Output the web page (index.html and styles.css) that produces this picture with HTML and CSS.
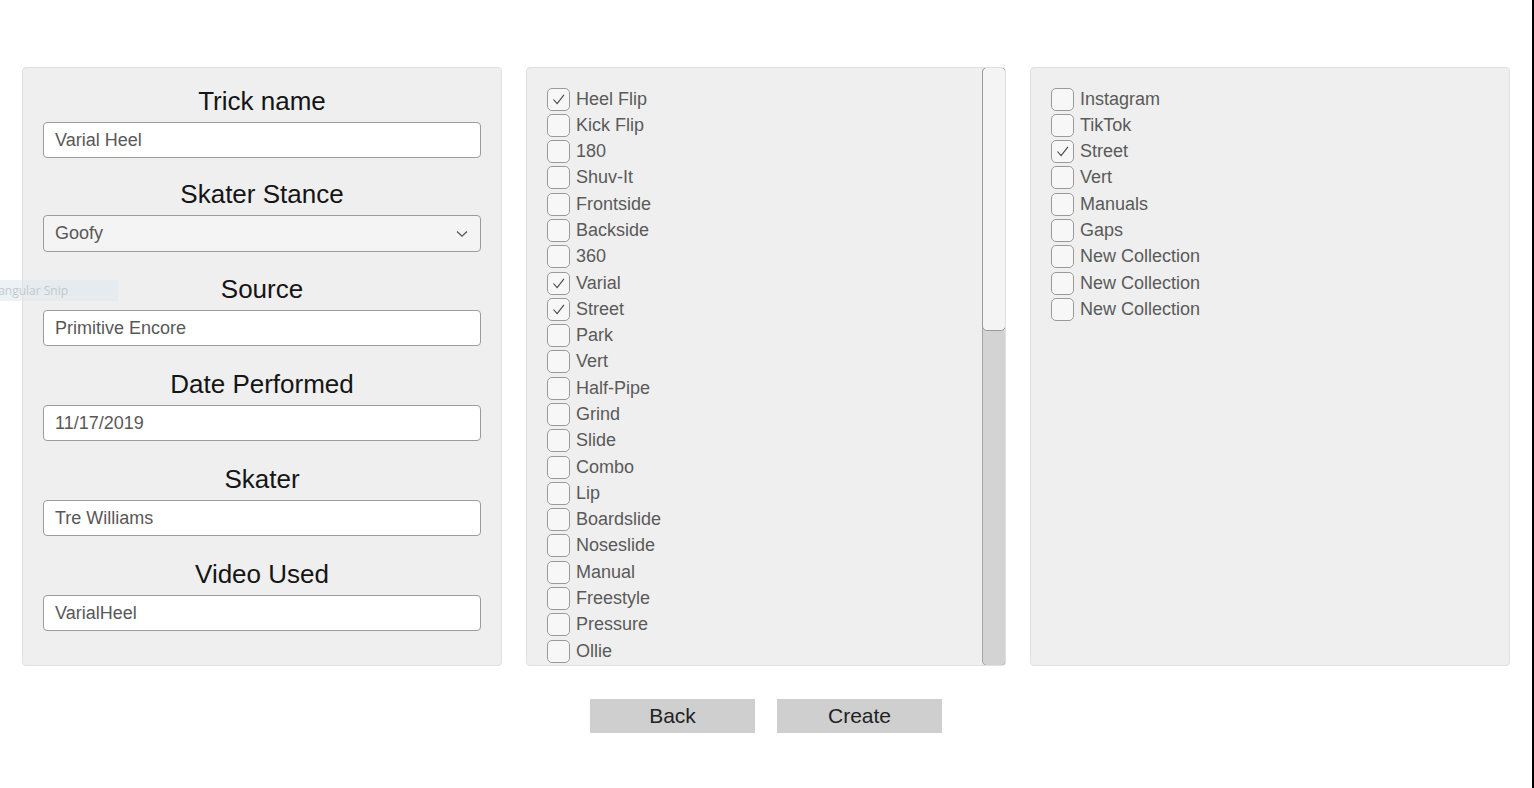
FILE: index.html
```html
<!DOCTYPE html>
<html lang="en">
<head>
<meta charset="utf-8">
<title>Create Trick</title>
<link rel="stylesheet" href="styles.css">
</head>
<body>
<div class="app">
  <div class="panels">
    <section class="panel form-panel">
      <div class="field">
        <label class="field-label">Trick name</label>
        <div class="input">Varial Heel</div>
      </div>
      <div class="field field-select">
        <label class="field-label">Skater Stance</label>
        <div class="input select">Goofy
          <svg class="chevron" width="12" height="8" viewBox="0 0 12 8"><path d="M1 1.5 L6 6.2 L11 1.5" fill="none" stroke="#555" stroke-width="1.3"/></svg>
        </div>
      </div>
      <div class="field">
        <label class="field-label">Source</label>
        <div class="input">Primitive Encore</div>
      </div>
      <div class="field">
        <label class="field-label">Date Performed</label>
        <div class="input">11/17/2019</div>
      </div>
      <div class="field">
        <label class="field-label">Skater</label>
        <div class="input">Tre Williams</div>
      </div>
      <div class="field">
        <label class="field-label">Video Used</label>
        <div class="input">VarialHeel</div>
      </div>
    </section>

    <section class="panel list-panel">
      <div class="list">
        <div class="item"><span class="box checked"><svg viewBox="0 0 23 23"><path d="M6 11.5 L10 16 L17.5 6.5" fill="none" stroke="#444" stroke-width="1.2"/></svg></span>Heel Flip</div>
        <div class="item"><span class="box"></span>Kick Flip</div>
        <div class="item"><span class="box"></span>180</div>
        <div class="item"><span class="box"></span>Shuv-It</div>
        <div class="item"><span class="box"></span>Frontside</div>
        <div class="item"><span class="box"></span>Backside</div>
        <div class="item"><span class="box"></span>360</div>
        <div class="item"><span class="box checked"><svg viewBox="0 0 23 23"><path d="M6 11.5 L10 16 L17.5 6.5" fill="none" stroke="#444" stroke-width="1.2"/></svg></span>Varial</div>
        <div class="item"><span class="box checked"><svg viewBox="0 0 23 23"><path d="M6 11.5 L10 16 L17.5 6.5" fill="none" stroke="#444" stroke-width="1.2"/></svg></span>Street</div>
        <div class="item"><span class="box"></span>Park</div>
        <div class="item"><span class="box"></span>Vert</div>
        <div class="item"><span class="box"></span>Half-Pipe</div>
        <div class="item"><span class="box"></span>Grind</div>
        <div class="item"><span class="box"></span>Slide</div>
        <div class="item"><span class="box"></span>Combo</div>
        <div class="item"><span class="box"></span>Lip</div>
        <div class="item"><span class="box"></span>Boardslide</div>
        <div class="item"><span class="box"></span>Noseslide</div>
        <div class="item"><span class="box"></span>Manual</div>
        <div class="item"><span class="box"></span>Freestyle</div>
        <div class="item"><span class="box"></span>Pressure</div>
        <div class="item"><span class="box"></span>Ollie</div>
        <div class="item"><span class="box"></span></div>
      </div>
      <div class="scrollbar">
        <div class="thumb"></div>
      </div>
    </section>

    <section class="panel list-panel plain">
      <div class="list">
        <div class="item"><span class="box"></span>Instagram</div>
        <div class="item"><span class="box"></span>TikTok</div>
        <div class="item"><span class="box checked"><svg viewBox="0 0 23 23"><path d="M6 11.5 L10 16 L17.5 6.5" fill="none" stroke="#444" stroke-width="1.2"/></svg></span>Street</div>
        <div class="item"><span class="box"></span>Vert</div>
        <div class="item"><span class="box"></span>Manuals</div>
        <div class="item"><span class="box"></span>Gaps</div>
        <div class="item"><span class="box"></span>New Collection</div>
        <div class="item"><span class="box"></span>New Collection</div>
        <div class="item"><span class="box"></span>New Collection</div>
      </div>
    </section>
  </div>

  <div class="actions">
    <button class="btn">Back</button>
    <button class="btn">Create</button>
  </div>

  <div class="snip-tip"><span>Rectangular Snip</span></div>
</div>
</body>
</html>
```

FILE: styles.css
```css
* {
  box-sizing: border-box;
}

html, body {
  margin: 0;
  padding: 0;
  background: #ffffff;
}

body {
  font-family: "Liberation Sans", Arial, sans-serif;
}

.app {
  position: relative;
  width: 1534px;
  height: 788px;
  border-right: 2px solid #000;
  padding-top: 67px;
  overflow: hidden;
}

.panels {
  display: flex;
  gap: 24px;
  padding-left: 22px;
}

.panel {
  width: 480px;
  height: 599px;
  background: #efefef;
  border: 1px solid #e0e0e0;
  border-radius: 4px;
}

/* Form panel */
.form-panel {
  padding: 18px 20px 0;
}

.field {
  margin-bottom: 23px;
}

.field:first-child {
  margin-bottom: 21px;
}

.field-select {
  margin-bottom: 22px;
}

.field-label {
  display: block;
  text-align: center;
  font-size: 26px;
  line-height: 30px;
  color: #151515;
  margin-bottom: 6px;
}

.input {
  height: 36px;
  background: #ffffff;
  border: 1px solid #9c9c9c;
  border-radius: 4px;
  padding: 0 11px;
  display: flex;
  align-items: center;
  font-size: 18px;
  color: #585858;
}

.select {
  height: 37px;
  background: #f4f4f4;
  justify-content: space-between;
}

.chevron {
  margin-right: 1px;
}

/* List panels */
.list-panel {
  display: flex;
  overflow: hidden;
}

.list {
  flex: 1;
  padding: 18px 20px 0;
  overflow: hidden;
}

.item {
  display: flex;
  align-items: center;
  height: 26.29px;
  font-size: 18px;
  color: #5a5a5a;
  white-space: nowrap;
}

.box {
  width: 23px;
  height: 23px;
  flex: none;
  border: 1px solid #9a9a9a;
  border-radius: 5px;
  background: #f7f7f7;
  margin-right: 6px;
  display: flex;
}

.box svg {
  width: 21px;
  height: 21px;
}

.scrollbar {
  width: 24px;
  flex: none;
  margin: -1px -1px -1px 0;
  background: #d3d3d3;
  border: 1px solid #a6a6a6;
  border-radius: 5px;
  position: relative;
}

.thumb {
  height: 264px;
  margin: -1px -1px 0;
  background: #f4f4f4;
  border: 1px solid #9a9a9a;
  border-radius: 5px;
}

/* Buttons */
.actions {
  display: flex;
  justify-content: center;
  gap: 22px;
  margin-top: 33px;
}

.btn {
  width: 165px;
  height: 34px;
  border: none;
  border-radius: 0;
  background: #cfcfcf;
  font-family: "Liberation Sans", Arial, sans-serif;
  font-size: 21px;
  color: #222;
  padding: 0;
}

/* Faint screen snip tooltip overlay */
.snip-tip {
  position: absolute;
  left: 0;
  top: 280px;
  width: 118px;
  height: 21px;
  background: rgba(222, 232, 238, 0.55);
  overflow: hidden;
  white-space: nowrap;
}

.snip-tip span {
  display: block;
  margin-left: -26px;
  font-family: "Open Sans", "Noto Sans", sans-serif;
  font-size: 12px;
  line-height: 21px;
  color: #c4c9cc;
}
```
